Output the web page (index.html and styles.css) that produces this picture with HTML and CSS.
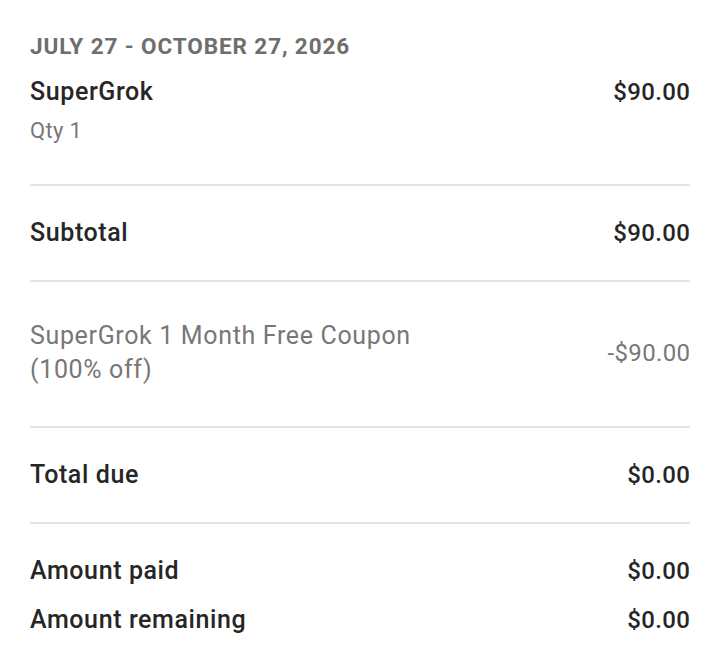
FILE: index.html
```html
<!DOCTYPE html>
<html>
<head>
<meta charset="utf-8">
<link rel="stylesheet" href="styles.css">
</head>
<body>
<div class="invoice">
  <section class="sec sec-item">
    <div class="period">July 27 - October 27, 2026</div>
    <div class="row">
      <div class="label strong">SuperGrok</div>
      <div class="amount strong">$90.00</div>
    </div>
    <div class="qty">Qty 1</div>
  </section>
  <section class="sec">
    <div class="row">
      <div class="label strong">Subtotal</div>
      <div class="amount strong">$90.00</div>
    </div>
  </section>
  <section class="sec sec-coupon">
    <div class="row center">
      <div class="label muted coupon">SuperGrok 1 Month Free Coupon<br>(100% off)</div>
      <div class="amount muted">-$90.00</div>
    </div>
  </section>
  <section class="sec">
    <div class="row">
      <div class="label strong">Total due</div>
      <div class="amount strong">$0.00</div>
    </div>
  </section>
  <section class="sec last">
    <div class="row">
      <div class="label strong">Amount paid</div>
      <div class="amount strong">$0.00</div>
    </div>
    <div class="row">
      <div class="label strong">Amount remaining</div>
      <div class="amount strong">$0.00</div>
    </div>
  </section>
</div>
</body>
</html>
```
FILE: styles.css
```css
html, body {
  margin: 0;
  padding: 0;
  background: #ffffff;
}
body {
  font-family: Roboto, "Liberation Sans", sans-serif;
  color: #262626;
}
.invoice {
  padding: 0 29px 0 30px;
}
.sec {
  border-bottom: 2px solid #e4e4e4;
  padding: 30px 0;
}
.sec.last {
  border-bottom: none;
  display: flex;
  flex-direction: column;
  gap: 15px;
}
.sec-item {
  padding: 32px 0 39px;
}
.sec-coupon {
  padding: 37px 0 39px;
}
.period {
  font-size: 22.5px;
  line-height: 28px;
  font-weight: 700;
  letter-spacing: 0.9px;
  text-transform: uppercase;
  color: #6e6e6e;
  margin-bottom: 15px;
}
.row {
  display: flex;
  justify-content: space-between;
  align-items: flex-start;
}
.row.center {
  align-items: center;
}
.label {
  font-size: 25px;
  line-height: 34px;
  letter-spacing: 0.6px;
}
.amount {
  font-size: 24px;
  line-height: 34px;
  letter-spacing: 0.35px;
  margin-right: -0.35px;
}
.strong {
  font-weight: 500;
  color: #262626;
}
.muted {
  font-weight: 400;
  color: #777777;
}
.coupon {
  letter-spacing: 0.65px;
}
.qty {
  font-size: 22px;
  line-height: 28px;
  letter-spacing: 0.3px;
  color: #777777;
  margin-top: 8px;
}
```
